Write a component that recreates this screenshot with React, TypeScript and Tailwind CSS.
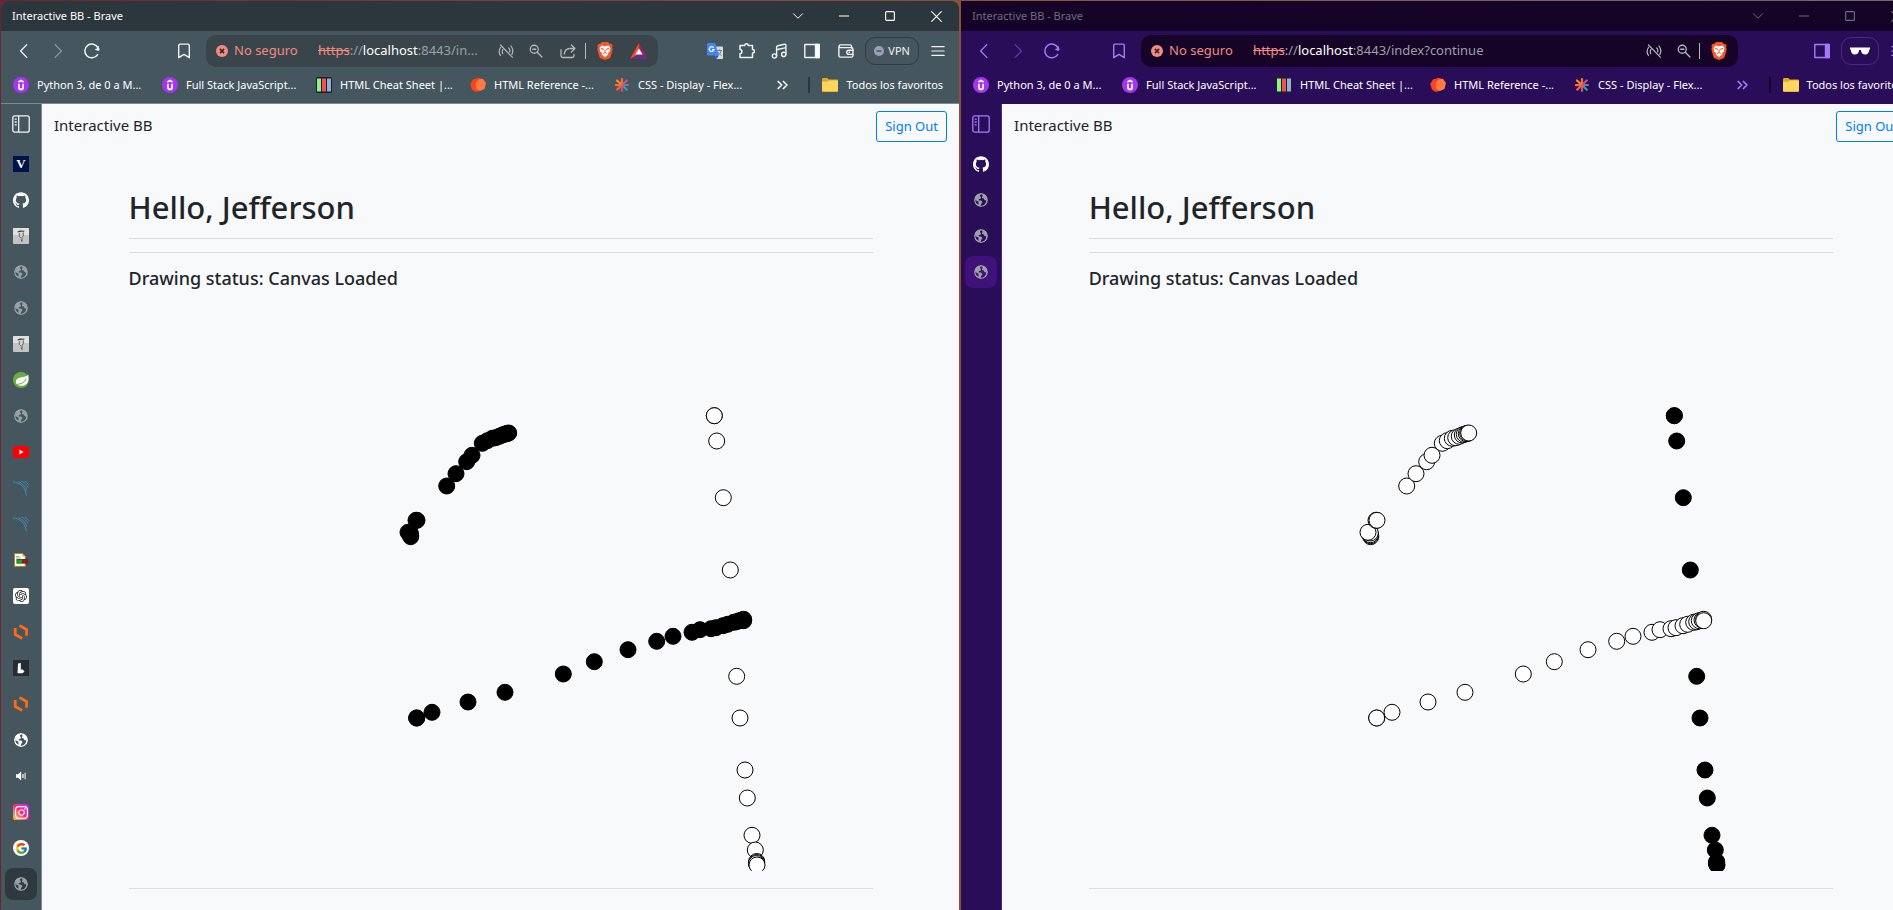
import { useId, type ReactNode } from "react";
import { SiBrave, SiGithub, SiInstagram, SiOpenai } from "react-icons/si";
import { FcGoogle } from "react-icons/fc";
import clsx from "clsx";

type Point = [number, number];

const arcStroke: Point[] = [
  [281.7, 237.7], [281.7, 236.7], [281.3, 235.7], [281.3, 234], [279, 233.3], [287, 221.3], [288, 221.3],
  [317.7, 187], [327, 174.7], [337.7, 162.7], [343, 156.3], [353.3, 144.3], [358.3, 141.7], [363.3, 139.3],
  [366.7, 138.7], [370.3, 137.3], [373.3, 136], [375.3, 135.3], [377.3, 134.7], [378.7, 134.3], [379.7, 134],
];

const slopeStroke: Point[] = [
  [287.7, 419], [287.7, 419], [303, 413.3], [339, 403], [376, 393.3], [434.3, 375], [465.3, 362.7],
  [499, 350.7], [527.7, 342.3], [544, 337.3], [563, 333.3], [571, 330.7], [582, 329.7], [587, 328.7],
  [594, 326.7], [598.7, 325.3], [604.7, 323.3], [607.7, 322.7], [610.3, 321.7], [613, 321], [614.7, 320.3],
  [614.7, 321.7],
];

const fallStroke: Point[] = [
  [585.3, 116.7], [585.3, 116.7], [587.7, 142], [594.3, 198.7], [601.3, 271], [607.7, 377.3], [611, 419],
  [616, 471], [618.3, 499], [623, 536.3], [626.3, 551], [627.7, 562.5], [627.7, 563.5], [627.4, 564.5], [628, 566],
];

interface Theme {
  title: string;
  titleText: string;
  bar: string;
  icon: string;
  dim: string;
  pill: string;
  selected: string;
  divider: string;
  line: string;
}

const slate: Theme = {
  title: "bg-[#2c373d]",
  titleText: "text-white",
  bar: "bg-[#45565f]",
  icon: "text-[#f0f3f5]",
  dim: "text-[#8b969c]",
  pill: "bg-[#39444b]",
  selected: "bg-[#2f3a40]",
  divider: "bg-[#2c373d]",
  line: "border-[#7d8a92]",
};

const violet: Theme = {
  title: "bg-[#150428]",
  titleText: "text-[#736a7e]",
  bar: "bg-[#2a0d58]",
  icon: "text-[#a27bf8]",
  dim: "text-[#5a3c9a]",
  pill: "bg-[#150428]",
  selected: "bg-[#3e1279]",
  divider: "bg-[#150428]",
  line: "border-[#2a0d58]",
};

function Line({ children, size = 16, width = 1.3 }: { children: ReactNode; size?: number; width?: number }) {
  return (
    <svg width={size} height={size} viewBox="0 0 16 16" fill="none" stroke="currentColor" strokeWidth={width} strokeLinecap="round" strokeLinejoin="round">
      {children}
    </svg>
  );
}

function IconButton({ label, className, children }: { label: string; className?: string; children: ReactNode }) {
  return (
    <button type="button" aria-label={label} className={clsx("flex h-8 shrink-0 items-center justify-center", className)}>
      {children}
    </button>
  );
}

const Back = () => <Line><path d="M10.8 1.6 4.6 8l6.2 6.4" /></Line>;
const Forward = () => <Line><path d="M5.2 1.6 11.4 8l-6.2 6.4" /></Line>;
const Reload = () => (
  <Line width={1.5}>
    <path d="M13.6 11.6A6.9 6.9 0 1 1 14 5" />
    <circle cx="14" cy="6.2" r="1.5" fill="currentColor" stroke="none" />
    <path d="M14 3.4v3.2h-2" />
  </Line>
);
const Ribbon = () => <Line width={1.4}><path d="M2.7 2.4c0-.8.5-1.3 1.3-1.3h8c.8 0 1.3.5 1.3 1.3v12.3L8 11.4l-5.3 3.3z" /></Line>;
const Danger = () => (
  <svg width="12" height="12" viewBox="0 0 12 12" className="shrink-0">
    <circle cx="6" cy="6" r="6" fill="#f28b82" />
    <path d="m3.9 3.9 4.2 4.2m0-4.2L3.9 8.1" stroke="#33262c" strokeWidth="1.5" />
  </svg>
);
const Antenna = () => (
  <Line width={1.2}>
    <path d="M2.500 4.500C.8 7 .8 10 2.500 12.500M4.800 6.500c-.7 1.500-.7 2.900 0 4.200M13 3c2 2.600 2.300 5.800.9 8.400M10.700 5c1.200 1.200 1.400 2.600 1 4M2.500 2l11.800 12.200" />
  </Line>
);
const ZoomOut = () => <Line size={14} width={1.5}><circle cx="6" cy="6" r="4.600" /><path d="m9.500 9.500 5.300 5.300M4.200 6h3.600" /></Line>;
const Share = () => <Line><path d="M1 6.600v6.200c0 1 .7 1.700 1.700 1.700h9.600c1 0 1.700-.7 1.700-1.700v-1.500M4.300 11c.3-3.500 2.600-5.500 6-5.500h4.400M11.400 2l3.500 3.500L11.400 9" /></Line>;
const Brave = () => (
  <span className="relative flex h-4 w-4 items-center justify-center">
    <SiBrave size={16} color="#fb542b" className="invisible" />
    <svg width="16" height="18" viewBox="0 0 16 18" className="absolute">
      <path d="M5 0h6l1.600 1.800 1.600-.1 1.500 2-.6 1.600.6 2-2 7.300c-.3 1-1 1.600-1.800 2L8 18l-3.900-1.400c-.8-.4-1.500-1-1.800-2l-2-7.300.6-2-.6-1.600 1.500-2 1.600.1z" fill="#fb542b" />
      <path d="M4.500 3.600 8 4.200l3.500-.6 2 2.400-.7 2.200.3 1.200-2.300 1.700.6 1.500L8 15l-3.400-2.400.6-1.500-2.300-1.700.3-1.200L2.500 6z" fill="#fff" />
      <path d="m3.900 6.300 2.600.8-.5 1M12.100 6.300l-2.600.8.500 1M8 7.500v2.600M6.200 11.600 8 10.400l1.800 1.200" stroke="#fb542b" strokeWidth="1" fill="none" />
    </svg>
  </span>
);
const Rewards = () => (
  <svg width="18" height="16" viewBox="0 0 18 16">
    <path d="M9 0 0 16l9-5z" fill="#ff4724" />
    <path d="m9 0 9 16-9-5z" fill="#9e1f63" />
    <path d="M0 16h18l-9-5z" fill="#662d91" />
    <path d="m9 5.400 3.600 6.200H5.400z" fill="#fff" />
  </svg>
);
const Translate = () => (
  <svg width="16" height="16" viewBox="0 0 16 16">
    <path d="M6 3.500h9a1 1 0 0 1 1 1V15a1 1 0 0 1-1 1H9.500z" fill="#dadce0" />
    <path d="M10 7.500h5M12.500 6.300v1.200M11 12.500c2-1.300 2.800-3 3-5M11.300 9c.8 1.800 1.800 2.800 3.200 3.500" stroke="#6b7780" strokeWidth=".9" fill="none" />
    <path d="M1 0h7.200l3.600 12.500H1a1 1 0 0 1-1-1V1a1 1 0 0 1 1-1z" fill="#4285f4" />
    <path d="M8.600 12.500h3.200L9.700 16z" fill="#1a57c9" />
    <path d="M6.600 4.700A2.400 2.400 0 1 0 7 6.600H4.900" stroke="#fff" strokeWidth="1.200" fill="none" />
  </svg>
);
const Puzzle = () => (
  <Line width={1.500}>
    <path d="M1 2.500h4.800c0-2.300 3.400-2.300 3.400 0h4.300v4c2.600 0 2.600 3.500 0 3.500v4.500H1v-3.800c2.500 0 2.500-4.200 0-4.200z" />
  </Line>
);
const Music = () => (
  <Line width={1.400}>
    <path d="M5.600 13V4.300c0-.8.4-1.300 1.200-1.500l6.700-1.600c.9-.2 1.400.2 1.400 1v9M5.600 6.800l9.300-2.200" />
    <circle cx="3.400" cy="13" r="2.100" /><circle cx="12.700" cy="11.400" r="2.100" />
  </Line>
);
const SidePanel = ({ fill }: { fill: string }) => (
  <Line width={1.400}>
    <path d="M.8 1.500h14.400v13H.8z" /><path d="M11.500 1.500h3.700v13h-3.700z" fill={fill} />
  </Line>
);
const Wallet = () => (
  <Line width={1.400}>
    <path d="M13.500 5V3.300c0-.9-.5-1.400-1.400-1.400H2.500C.6 1.900.7 4.600 2.500 4.600h11c.9 0 1.400.5 1.400 1.400v6.700c0 .9-.5 1.400-1.400 1.400H2.300c-.9 0-1.400-.5-1.400-1.400V3.500" />
    <path d="M15 7.200h-4.300c-2.600 0-2.600 4.200 0 4.200H15M11 9.300h.5" />
  </Line>
);
const Menu = () => <Line size={14} width={1.400}><path d="M1 3h14M1 8h14M1 13h14" /></Line>;
const Glasses = () => (
  <svg width="20" height="8" viewBox="0 0 20 8" fill="#fff">
    <path d="M0 .5h20v1.800l-.8.400c-.2 3-1.400 4.800-4 4.800-2.500 0-4-1.600-4.300-4.600H9.100C8.800 5.900 7.300 7.500 4.800 7.500c-2.600 0-3.800-1.800-4-4.800L0 2.300z" />
  </svg>
);
const Tabs = () => (
  <svg width="18" height="18" viewBox="0 0 18 18" fill="none" stroke="currentColor" strokeWidth="1.300">
    <rect x=".8" y=".8" width="16.400" height="16.400" rx="2" />
    <path d="M6.700 1v16M2.700 4.200h2M2.700 7h2M2.700 9.800h2" />
  </svg>
);

const Globe = ({ color }: { color: string }) => (
  <svg width="14" height="14" viewBox="0 0 14 14">
    <mask id={"land" + color.slice(1)}>
      <circle cx="7" cy="7" r="7" fill="#fff" />
      <path d="M8.200 1.400C6.500 1.300 5.700 2 6 3.100c.2.900 1 .8.900 1.800-.1.800-1.300.7-2 1.300-.6.500-.3 1.100.6 1.200 1.300.1 2.700.2 2.800 1.500.1 1-.8 1.300-1.200 2.100-.3.600-.2 1.200-.5 1.800 1.600.1 3-.5 4-1.500 1.100-1.100 1.700-2.600 1.500-4.100-.7.300-1.300.2-1.700-.3-.5-.6-.1-1.300-.8-1.500-.8-.2-1.300.2-1.600-.4-.3-.8.600-1.300.5-2.200zM1.400 6.500c-.1 2.500 1 4.200 3 5.200.4-.9-.2-1.500.1-2.300.2-.6 0-1-.6-1.200C2.700 8 2.200 7.500 1.400 6.500z" fill="#000" />
    </mask>
    <circle cx="7" cy="7" r="7" fill={color} mask={`url(#land${color.slice(1)})`} />
  </svg>
);
const Portrait = () => (
  <svg width="16" height="16" viewBox="0 0 16 16">
    <rect width="16" height="16" rx="1" fill="#c2c4c4" />
    <path d="M0 1a1 1 0 0 1 1-1h14a1 1 0 0 1 1 1v6H0z" fill="#dfe0e0" />
    <path d="M4.500 3.600 7 2.500l4.700.2-.6 1-3 .1-3.300.8z" fill="#3b3b3b" />
    <path d="m6.200 5 3.600-.6.300 3.600-1.400 1.500-2-.8z" fill="#d2cdc7" />
    <path d="M6.300 5.200v3.200l1.500 1.500M10.300 4.300v3.500L9 9.500v4M8 11.500l1 2" stroke="#5a5856" strokeWidth=".9" fill="none" />
  </svg>
);
const Spring = () => (
  <svg width="16" height="16" viewBox="0 0 16 16">
    <circle cx="8" cy="8" r="8" fill="#68ad3e" />
    <path d="M15.200 2.600c-1.300 2-3.500 2.300-6.200 2.600-4 .4-6.500 2.200-6 5.300.1 1 .5 1.700 1 2.300 3 1.700 7.700 1.300 9.900-1.400 1.800-2.300 2-5.500 1.300-8.800z" fill="#fff" />
    <path d="M3.400 12.500c4.500-.3 8.200-2 10-5.800" stroke="#68ad3e" strokeWidth="1" fill="none" />
  </svg>
);
const YouTube = () => (
  <svg width="16" height="12" viewBox="0 0 16 12"><rect width="16" height="12" rx="2" fill="#f00" /><path d="M6.400 3.500v5L10.600 6z" fill="#fff" /></svg>
);
const Curves = () => (
  <svg width="16" height="16" viewBox="0 0 16 16" fill="none" stroke="#3f8fc6" strokeWidth=".9">
    <path d="M0 2C7 2.300 12.500 7 13.300 15.500M5.500 1.500c4 1.800 7 5 8.200 9M8.500 1c3 1.500 5.200 3.700 6.500 6.500M11.500 1c1.500.8 3 2 4 3.600" />
  </svg>
);
const Doc = () => (
  <svg width="16" height="16" viewBox="0 0 16 16">
    <path d="M1.500 1.500h7.800l3 3v9.900H1.500z" fill="#fffef5" stroke="#a8842c" />
    <path d="M9.300 1.500v3h3z" fill="#e5b53c" />
    <path d="M3 4.500h3.500M3 6h5" stroke="#8796b0" strokeWidth=".8" />
    <path d="M3.500 7H15v4.600H3.500z" fill="#333" />
    <path d="M4.200 7.500h5v3.600h-5z" fill="#0fae0f" /><path d="M9.600 7.500h5v3.600h-5z" fill="#b20d0d" />
  </svg>
);
const Brackets = () => (
  <svg width="16" height="16" viewBox="0 0 16 16" fill="none" stroke="#fe6a16" strokeWidth="2.800" strokeLinejoin="round">
    <path d="m6.600 1.500 7 4v6.300M9.200 14.500l-7-4V4" />
  </svg>
);
const Tile = () => (
  <svg width="16" height="16" viewBox="0 0 16 16"><path d="M0 0h16v16H0z" fill="#262c33" /><path d="M5 3.500 7.800 3v6.500h2l1.700 2.300-2.200 1.500H4.500z" fill="#fff" /></svg>
);
const Speaker = () => (
  <svg width="10" height="10" viewBox="0 0 10 10" fill="#fff"><path d="M0 3.200h2L5.200.4v9.200L2 6.800H0zM6.400 3h1.200v4H6.400zM8.600 1.800h1v6.400h-1z" /></svg>
);
const Insta = () => (
  <span className="flex h-4 w-4 items-center justify-center rounded-xs bg-linear-to-tr from-[#ffc400] via-[#ff1d7a] to-[#b100ff]">
    <SiInstagram size={13} color="#fff" />
  </span>
);
const Villa = () => <span className="flex h-4 w-4 items-center justify-center bg-[#00124a] font-['Liberation_Serif',serif] text-[13px] leading-4 font-bold text-white">V</span>;

const Udemy = () => (
  <svg width="16" height="16" viewBox="0 0 16 16">
    <circle cx="8" cy="8" r="8" fill="#a435f0" />
    <path d="M5.400 5 8 3.500 10.600 5" stroke="#fff" strokeWidth="1.600" fill="none" />
    <path d="M5.900 6.800v3.600c0 2.600 4.200 2.600 4.200 0V6.800" stroke="#fff" strokeWidth="1.700" fill="none" />
  </svg>
);
const Stripes = () => (
  <svg width="16" height="16" viewBox="0 0 16 16">
    <rect width="16" height="16" rx="1.500" fill="#1c1f2b" />
    <path d="M1 1.500h4v13H1z" fill="#96f08a" /><path d="M6 1.500h4v13H6z" fill="#f0524f" /><path d="M11 1.500h4v13h-4z" fill="#8fb1d6" />
  </svg>
);
const Gem = () => (
  <svg width="16" height="16" viewBox="0 0 16 16">
    <path d="m3 2.500 6-1.800 3.500 1.500L9.500 14 5.500 15 2 12.500.2 7z" fill="#fd4318" />
    <path d="m8.500 2.500 4.500-.8L16 6l-1.500 6-4.500 2-4-2.500L5.500 6.500z" fill="#ff7a45" />
  </svg>
);
const Asterisk = () => (
  <svg width="16" height="16" viewBox="0 0 16 16" strokeWidth="2.200" strokeLinecap="round">
    <path d="M8 8V2M8 8l-6 .2" stroke="#fd6a3f" /><path d="M8 8 3 3.500" stroke="#ff8a1c" /><path d="m8 8 4.800-4.500" stroke="#d64f7b" />
    <path d="M8 8H14" stroke="#6a7f9c" /><path d="m8 8 4.800 4.800" stroke="#2fa0ad" /><path d="M8 8v6" stroke="#cf4b7a" /><path d="m8 8-4.800 4.600" stroke="#f2603c" />
  </svg>
);
const Folder = () => (
  <svg width="16" height="14" viewBox="0 0 16 14">
    <path d="M0 1.300C0 .6.500 0 1.300 0h3.900l1.500 1.600h8c.8 0 1.300.5 1.300 1.200v9.900c0 .8-.5 1.300-1.300 1.300H1.300C.5 14 0 13.500 0 12.700z" fill="#e0a828" />
    <path d="M0 3.800h5.200l1.500-1.300h8c.8 0 1.300.5 1.300 1.200V12c0 .8-.5 1.300-1.300 1.300H1.300C.5 13.300 0 12.800 0 12z" fill="#ffd75e" />
  </svg>
);

const bookmarks = [
  { text: "Python 3, de 0 a M...", icon: <Udemy />, width: "w-[149px]" },
  { text: "Full Stack JavaScript...", icon: <Udemy />, width: "w-[154px]" },
  { text: "HTML Cheat Sheet |...", icon: <Stripes />, width: "w-[154px]" },
  { text: "HTML Reference -...", icon: <Gem />, width: "w-[144px]" },
  { text: "CSS - Display - Flex...", icon: <Asterisk />, width: "w-[154px]" },
];

function Dots({ points, filled }: { points: Point[]; filled: boolean }) {
  return (
    <g fill={filled ? "#000" : "#fff"} stroke="#000">
      {points.map(([x, y], i) => <circle key={i} cx={x} cy={y} r="8" />)}
    </g>
  );
}

function Board({ inverted }: { inverted: boolean }) {
  return (
    <div className="flex min-w-0 flex-1 flex-col bg-[#f8f9fb] text-[#212529]">
      <nav className="flex items-start justify-between px-3 py-[7px]">
        <a href="#" className="pt-0.5 text-[15px] leading-6 text-[#212529]">Interactive BB</a>
        <button type="button" className="h-[31px] w-[71px] rounded-[3px] border border-[#007bff] text-[13px] whitespace-nowrap text-[#007bff]">Sign Out</button>
      </nav>
      <main className="mx-auto w-full max-w-[744px] pt-[38px]">
        <h1 className="text-[31px] leading-10 font-medium">Hello, Jefferson</h1>
        <hr className="mt-[11px] border-[#dcdee0]" />
        <hr className="mt-[13px] border-[#dcdee0]" />
        <h2 className="mt-[13px] text-lg leading-6 font-medium">Drawing status: Canvas Loaded</h2>
        <svg role="img" aria-label="Drawing canvas" width="744" height="572" viewBox="0 0 744 572" className="mt-[9px] block">
          <Dots points={arcStroke} filled={!inverted} />
          <Dots points={slopeStroke} filled={!inverted} />
          <Dots points={fallStroke} filled={inverted} />
        </svg>
        <hr className="mt-[17px] border-[#dcdee0]" />
      </main>
    </div>
  );
}

interface WindowProps {
  theme: Theme;
  path: string;
  tabs: ReactNode[];
  pillIcons: ReactNode;
  actions: ReactNode;
  inverted?: boolean;
  bookmarkSlot: string;
}

function BrowserWindow({ theme, path, tabs, pillIcons, actions, inverted = false, bookmarkSlot }: WindowProps) {
  const addressId = useId();
  return (
    <section className={clsx("flex shrink-0 basis-[50.64%] flex-col overflow-hidden", theme.bar, !inverted && "rounded-t-lg")}>
      <header className={clsx("flex h-[30px] items-center justify-between pl-[11px]", theme.title, theme.titleText)}>
        <span className="text-[11px]">Interactive BB - Brave</span>
        <div className="flex">
          <IconButton label="Search tabs" className="w-[46px]"><Line size={12}><path d="m2 5 6 6 6-6" /></Line></IconButton>
          <IconButton label="Minimize" className="w-[46px]"><Line size={10} width={1.600}><path d="M0 8h16" /></Line></IconButton>
          <IconButton label="Maximize" className="w-[46px]"><Line size={10} width={1.800}><rect x="1" y="1" width="14" height="14" rx="1.500" /></Line></IconButton>
          <IconButton label="Close" className="w-[46px]"><Line size={11} width={1.600}><path d="m1 1 14 14M15 1 1 15" /></Line></IconButton>
        </div>
      </header>
      <div className={clsx("flex h-10 items-center pr-1.5 pl-1.5", theme.icon)}>
        <IconButton label="Back" className="w-[34px]"><Back /></IconButton>
        <IconButton label="Forward" className={clsx("w-[34px]", theme.dim)}><Forward /></IconButton>
        <IconButton label="Reload" className="w-[34px]"><Reload /></IconButton>
        <IconButton label="Bookmark this page" className={clsx("w-8", bookmarkSlot)}><Ribbon /></IconButton>
        <div className={clsx("ml-1.5 flex h-8 min-w-0 flex-1 items-center rounded-[10px] pl-2.5", theme.pill)}>
          <Danger />
          <span className="ml-1.5 w-[84px] shrink-0 text-[13px] text-[#f28b82]">No seguro</span>
          <label htmlFor={addressId} className="text-[13px] text-[#9aa0a6]">
            <s className="text-[#f28b82]">https</s>://<span className="text-white">localhost</span>
          </label>
          <input id={addressId} aria-label="Address" defaultValue={path} className="min-w-0 flex-1 bg-transparent text-[13px] text-[#9aa0a6] outline-none" />
          <div className="flex items-center pr-0.5 text-[#b3b9bd]">{pillIcons}</div>
        </div>
        {actions}
        <IconButton label="Menu" className="w-[30px]"><Menu /></IconButton>
      </div>
      <div className={clsx("flex h-[33px] items-start border-b", theme.line)}>
        <div className="flex h-7 flex-1 items-center pr-4 pl-3 text-white">
          {bookmarks.map((b) => (
            <a key={b.text} href="#" className={clsx("flex shrink-0 items-center gap-2 text-[11px] whitespace-nowrap", b.width)}>
              {b.icon}
              {b.text}
            </a>
          ))}
          <button type="button" aria-label="More bookmarks" className={clsx("ml-2", theme.icon)}>
            <Line size={14} width={2}><path d="m2.500 4 4 4-4 4M8.500 4l4 4-4 4" /></Line>
          </button>
          <span className={clsx("ml-auto h-4 w-0.5 shrink-0", theme.divider)} />
          <button type="button" className="ml-3 flex shrink-0 items-center gap-2 text-[11px] whitespace-nowrap"><Folder />Todos los favoritos</button>
        </div>
      </div>
      <div className="flex flex-1">
        <aside className={clsx("flex w-[41px] shrink-0 flex-col items-center gap-1 border-r pt-1", theme.icon, inverted ? "border-[#4a2a80]" : "border-[#7d8a92]")}>
          <IconButton label="Tabs" className="mb-1 w-8"><Tabs /></IconButton>
          {tabs.map((tab, i) => (
            <IconButton key={i} label={`Tab ${i + 1}`} className={clsx("w-8 rounded-lg", i === tabs.length - 1 && theme.selected)}>{tab}</IconButton>
          ))}
        </aside>
        <Board inverted={inverted} />
      </div>
    </section>
  );
}

const gray = <Globe color="#9aa0a6" />;

const leftTabs = [
  <Villa />, <SiGithub size={16} color="#fff" />, <Portrait />, gray, gray, <Portrait />, <Spring />, gray,
  <YouTube />, <Curves />, <Curves />, <Doc />,
  <span className="flex h-4 w-4 items-center justify-center rounded-xs bg-white"><SiOpenai size={12} color="#222" /></span>,
  <Brackets />, <Tile />, <Brackets />, <Globe color="#ffffff" />, <Speaker />, <Insta />,
  <span className="flex h-4 w-4 items-center justify-center rounded-full bg-white"><FcGoogle size={13} /></span>,
  gray,
];

const rightTabs = [<SiGithub size={16} color="#fff" />, gray, gray, gray];

export default function App() {
  return (
    <div className="flex h-screen gap-0.5 overflow-hidden bg-linear-to-r from-[#6b2530] via-[#8a5238] to-[#6e6a66] pt-px pl-px font-['Noto_Sans',sans-serif]">
      <BrowserWindow
        theme={slate}
        path=":8443/in..."
        tabs={leftTabs}
        bookmarkSlot="ml-[59px]"
        pillIcons={
          <>
            <IconButton label="Sensors blocked" className="w-[30px]"><Antenna /></IconButton>
            <IconButton label="Zoom" className="w-[30px]"><ZoomOut /></IconButton>
            <IconButton label="Share" className="w-[34px]"><Share /></IconButton>
            <span className="h-4 w-px bg-current" />
            <IconButton label="Shields" className="ml-0.5 w-[34px]"><Brave /></IconButton>
            <IconButton label="Rewards" className="w-[34px]"><Rewards /></IconButton>
          </>
        }
        actions={
          <>
            <div className="ml-[41px] flex">
              <IconButton label="Translate" className="w-8"><Translate /></IconButton>
              <IconButton label="Extensions" className="w-8"><Puzzle /></IconButton>
              <IconButton label="Playlist" className="w-8"><Music /></IconButton>
              <IconButton label="Side panel" className="w-[34px]"><SidePanel fill="#fff" /></IconButton>
              <IconButton label="Wallet" className="w-[34px]"><Wallet /></IconButton>
            </div>
            <button type="button" className="mr-1 ml-0.5 flex h-7 w-[54px] items-center justify-center gap-1 rounded-[10px] border border-[#2f3a40] text-[11px]">
              <svg width="10" height="10" viewBox="0 0 10 10"><circle cx="5" cy="5" r="5" fill="#9c9fb8" /><path d="M2.500 5h5" stroke="#45565f" strokeWidth="1.500" /></svg>
              VPN
            </button>
          </>
        }
      />
      <BrowserWindow
        theme={violet}
        path=":8443/index?continue"
        tabs={rightTabs}
        bookmarkSlot="ml-[34px]"
        inverted
        pillIcons={
          <>
            <IconButton label="Sensors blocked" className="w-[30px]"><Antenna /></IconButton>
            <IconButton label="Zoom" className="w-[30px]"><ZoomOut /></IconButton>
            <span className="h-4 w-px bg-current" />
            <IconButton label="Shields" className="ml-0.5 w-[34px]"><Brave /></IconButton>
          </>
        }
        actions={
          <>
            <IconButton label="Side panel" className="ml-[68px] w-8"><SidePanel fill="#a27bf8" /></IconButton>
            <button type="button" aria-label="Private window" className="mr-1 ml-[3px] flex h-7 w-[38px] items-center justify-center rounded-[10px] border border-[#4a2a80]"><Glasses /></button>
          </>
        }
      />
    </div>
  );
}
